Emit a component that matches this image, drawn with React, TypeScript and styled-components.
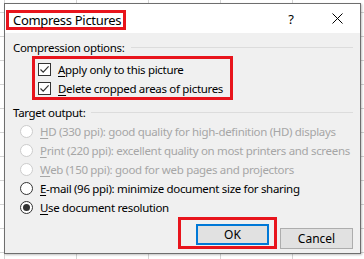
import React from 'react';
import styled, { createGlobalStyle } from 'styled-components';

const GlobalStyle = createGlobalStyle`
  html, body {
    margin: 0;
    padding: 0;
  }
  body {
    width: 364px;
    height: 259px;
    overflow: hidden;
    background-color: #ffffff;
    /* spreadsheet grid behind the dialog */
    background-image:
      linear-gradient(to right, #d4d4d4 1px, transparent 1px),
      linear-gradient(to bottom, #d4d4d4 1px, transparent 1px);
    background-size: 72px 24px;
    background-position: 4px 12px;
    font-family: "Noto Sans", "Open Sans", sans-serif;
  }
`;

const Dialog = styled.div`
  margin: 3px 0 0 4px;
  width: 357px;
  height: 251px;
  box-sizing: border-box;
  border: 1px solid #6e6e6e;
  background: #f0f0f0;
  box-shadow: 1px 1px 2px rgba(0, 0, 0, 0.25);
  display: flex;
  flex-direction: column;
`;

const TitleBar = styled.div`
  height: 29px;
  background: #ffffff;
  display: flex;
  align-items: center;
  padding: 0 0 0 1px;
`;

const RedBox = styled.div`
  border: 3px solid #e8141c;
  box-sizing: border-box;
`;

const TitleBox = styled(RedBox)`
  height: 20px;
  display: flex;
  align-items: center;
  padding: 0 0 0 4px;
  width: 120px;
  margin-top: 2px;
`;

const Title = styled.span`
  font-size: 13px;
  letter-spacing: -0.3px;
  color: #000;
  white-space: nowrap;
`;

const TitleButtons = styled.div`
  margin-left: auto;
  display: flex;
  align-items: center;
  height: 100%;
`;

const TitleButton = styled.div`
  width: 46px;
  height: 29px;
  display: flex;
  align-items: center;
  justify-content: center;
  font-size: 13px;
  color: #000;
`;

const Body = styled.div`
  flex: 1;
  display: flex;
  flex-direction: column;
  padding: 0 7px 0 8px;
  font-size: 11.5px;
  letter-spacing: -0.32px;
`;

const GroupHeader = styled.div<{ $top: number }>`
  margin-top: ${p => p.$top}px;
  height: 16px;
  display: flex;
  align-items: center;
  gap: 6px;
  color: #000;
  white-space: nowrap;

  &::after {
    content: '';
    flex: 1;
    height: 1px;
    background: #dcdcdc;
    margin-top: 1px;
  }
`;

const CheckGroup = styled(RedBox)`
  margin: 1px 0 0 19px;
  width: 201px;
  height: 44px;
  padding: 1px 0 0 3px;
`;

const Row = styled.label<{ $disabled?: boolean }>`
  height: 19px;
  display: flex;
  align-items: center;
  gap: 7px;
  color: ${p => (p.$disabled ? '#a6a6a6' : '#000')};
  white-space: nowrap;

  u {
    text-decoration-thickness: 1px;
    text-underline-offset: 2px;
  }
`;

const Box = styled.span`
  width: 13px;
  height: 13px;
  box-sizing: border-box;
  border: 1px solid #333;
  background: #fff;
  display: flex;
  align-items: center;
  justify-content: center;
  flex-shrink: 0;
`;

const RadioList = styled.div`
  margin: 2px 0 0 7px;
  display: flex;
  flex-direction: column;
`;

const Circle = styled.span<{ $disabled?: boolean; $checked?: boolean }>`
  width: 13px;
  height: 13px;
  box-sizing: border-box;
  border-radius: 50%;
  border: 1px solid ${p => (p.$disabled ? '#cccccc' : '#333')};
  background: #fff;
  display: flex;
  align-items: center;
  justify-content: center;
  flex-shrink: 0;

  &::after {
    content: '';
    display: ${p => (p.$checked ? 'block' : 'none')};
    width: 7px;
    height: 7px;
    border-radius: 50%;
    background: #333;
  }
`;

const Footer = styled.div`
  margin-top: auto;
  display: flex;
  justify-content: flex-end;
  align-items: flex-end;
  gap: 3px;
  padding-bottom: 7px;
`;

const OkBox = styled(RedBox)`
  width: 99px;
  height: 32px;
  padding: 4px 5px 1px 15px;
  display: flex;
`;

const Button = styled.button<{ $default?: boolean }>`
  width: 73px;
  height: 21px;
  box-sizing: border-box;
  border: ${p => (p.$default ? '2px solid #0078d7' : '1px solid #adadad')};
  background: #e1e1e1;
  font-family: "Noto Sans", "Open Sans", sans-serif;
  font-size: 12px;
  color: #000;
  padding: 0;
  display: flex;
  align-items: center;
  justify-content: center;
`;

const Check = () => (
  <svg width="11" height="11" viewBox="0 0 11 11">
    <path d="M1.5 5.5 L4.2 8.2 L9.6 2.4" fill="none" stroke="#333" strokeWidth="1.2" />
  </svg>
);

const radios = [
  { key: 'H', rest: 'D (330 ppi): good quality for high-definition (HD) displays', disabled: true },
  { key: 'P', rest: 'rint (220 ppi): excellent quality on most printers and screens', disabled: true },
  { key: 'W', rest: 'eb (150 ppi): good for web pages and projectors', disabled: true },
  { key: 'E', rest: '-mail (96 ppi): minimize document size for sharing', disabled: false },
  { key: 'U', rest: 'se document resolution', disabled: false, checked: true },
];

export default function App() {
  return (
    <>
      <GlobalStyle />
      <Dialog>
        <TitleBar>
          <TitleBox>
            <Title>Compress Pictures</Title>
          </TitleBox>
          <TitleButtons>
            <TitleButton>?</TitleButton>
            <TitleButton>
              <svg width="11" height="11" viewBox="0 0 11 11">
                <path d="M0.5 0.5 L10.5 10.5 M10.5 0.5 L0.5 10.5" stroke="#000" strokeWidth="1" />
              </svg>
            </TitleButton>
          </TitleButtons>
        </TitleBar>
        <Body>
          <GroupHeader $top={6}>Compression options:</GroupHeader>
          <CheckGroup>
            <Row>
              <Box><Check /></Box>
              <span><u>A</u>pply only to this picture</span>
            </Row>
            <Row>
              <Box><Check /></Box>
              <span><u>D</u>elete cropped areas of pictures</span>
            </Row>
          </CheckGroup>
          <GroupHeader $top={4}>Target output:</GroupHeader>
          <RadioList>
            {radios.map(r => (
              <Row key={r.key} $disabled={r.disabled}>
                <Circle $disabled={r.disabled} $checked={r.checked} />
                <span><u>{r.key}</u>{r.rest}</span>
              </Row>
            ))}
          </RadioList>
          <Footer>
            <OkBox>
              <Button $default>OK</Button>
            </OkBox>
            <Button>Cancel</Button>
          </Footer>
        </Body>
      </Dialog>
    </>
  );
}
